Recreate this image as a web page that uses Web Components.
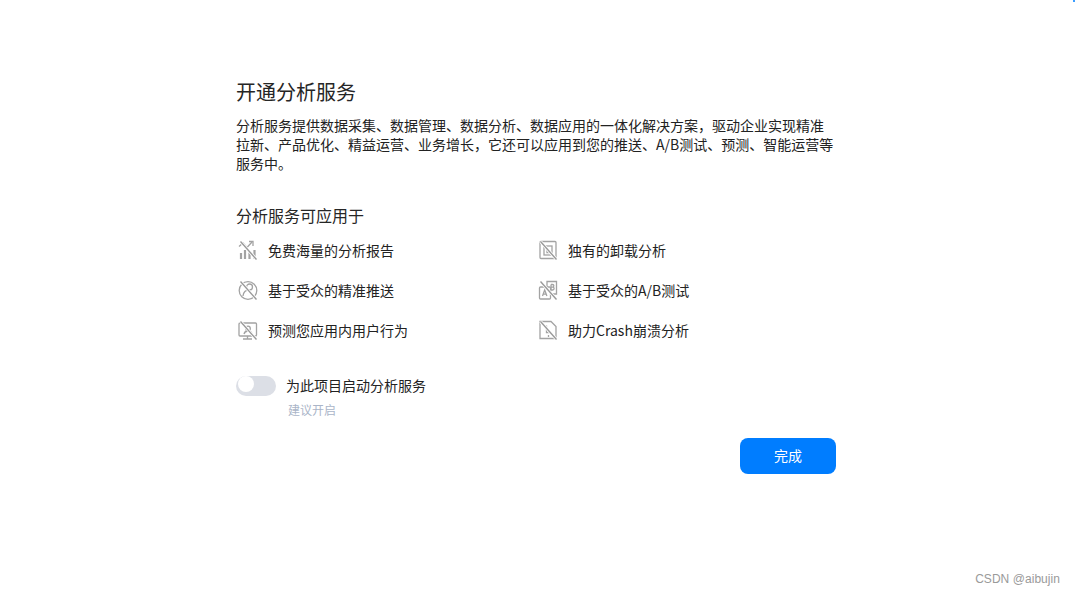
<!DOCTYPE html>
<html lang="zh">
<head>
<meta charset="utf-8">
<style>
html, body { margin: 0; height: 100%; background: #fff; }
body { font-family: "Noto Sans CJK SC", "Liberation Sans", sans-serif; color: #222; text-spacing-trim: space-all; }
</style>
</head>
<body>
<setup-page>
  <span slot="title">开通分析服务</span>
  <span slot="desc">分析服务提供数据采集、数据管理、数据分析、数据应用的一体化解决方案，驱动企业实现精准拉新、产品优化、精益运营、业务增长，它还可以应用到您的推送、A/B测试、预测、智能运营等服务中。</span>
  <span slot="subtitle">分析服务可应用于</span>
  <feature-item icon="chart">免费海量的分析报告</feature-item>
  <feature-item icon="phone">独有的卸载分析</feature-item>
  <feature-item icon="target">基于受众的精准推送</feature-item>
  <feature-item icon="ab">基于受众的A/B测试</feature-item>
  <feature-item icon="screen">预测您应用内用户行为</feature-item>
  <feature-item icon="doc">助力Crash崩溃分析</feature-item>
  <toggle-row hint="建议开启">为此项目启动分析服务</toggle-row>
  <primary-button>完成</primary-button>
</setup-page>

<script>
// every icon gets the same crossed-out line, with a white gap under it
const slash = '<path d="M2.500 1.500l16 18" stroke="#fff" stroke-width="3"/><path d="M2.500 1.500l16 18" stroke="#999" stroke-width="1.400"/>';
const icons = {
  chart: '<path d="M1 6.500l4-3.500 4 4.500 5-5.500"/><path d="M11 1.500h4V6"/><path d="M3 19v-6M7 19v-9M11.500 19v-7M16.500 19v-9" stroke-width="2.200"/>',
  target: '<circle cx="10" cy="10.500" r="8.800"/><circle cx="11.500" cy="7" r="3"/><path d="M5 16c.5-4 3-6 6-6"/>',
  screen: '<rect x="1" y="3" width="17.500" height="13" rx="1"/><path d="M5 19h9M9.500 16v3"/><circle cx="10" cy="8.500" r="2.300"/><path d="M6 14c.5-2 2-3 4-3s3.500 1 4 3"/>',
  phone: '<rect x="2" y="1.500" width="16" height="17" rx="1"/><rect x="6" y="6" width="8" height="9"/><path d="M9 8.500v4h2.500"/>',
  ab: '<path d="M9 7V1.500h9.500V14H13"/><rect x="1.500" y="7" width="11" height="12" rx="1"/><path d="M4.500 16l2.200-6 2.200 6M5.300 14.200h2.800"/><path d="M13 4.500v5.500h1.700a1.400 1.400 0 000-2.800H13M13 4.500h1.500a1.300 1.300 0 010 2.700"/>',
  doc: '<path d="M2 1.500h11l5 5v12H2z"/><path d="M8.500 5.500v7h4M10.500 15v2"/>'
};

const pageTpl = document.createElement('template');
pageTpl.innerHTML = `
<style>
:host { display: block; min-height: 595px; position: relative; padding-left: 236px; }
.main { width: 600px; padding-top: 78px; }
h1 { margin: 0; font-size: 20px; font-weight: 400; line-height: 28px; color: #262626; }
p { margin: 10px 0 0; font-size: 14px; line-height: 19px; color: #222; }
h2 { margin: 31px 0 0; font-size: 16px; font-weight: 400; line-height: 22px; color: #262626; }
.grid { display: grid; grid-template-columns: 300px 300px; grid-auto-rows: 40px; margin-top: 4px; }
.foot { display: flex; justify-content: flex-end; margin-top: 20px; }
.mark { position: absolute; top: 0; right: 0; width: 2px; height: 2px; background: #3b9dff; }
.wm { position: absolute; right: 15px; top: 571px; font: 12px/16px "Liberation Sans", sans-serif; color: #9a9a9a; letter-spacing: .05px; }
</style>
<div class="main">
  <h1><slot name="title"></slot></h1>
  <p><slot name="desc"></slot></p>
  <h2><slot name="subtitle"></slot></h2>
  <div class="grid"><slot></slot></div>
  <slot name="toggle"></slot>
  <div class="foot"><slot name="action"></slot></div>
</div>
<span class="mark"></span>
<span class="wm">CSDN @aibujin</span>`;

class SetupPage extends HTMLElement {
  constructor() {
    super();
    this.attachShadow({mode: 'open'}).appendChild(pageTpl.content.cloneNode(true));
  }
  connectedCallback() {
    this.querySelector('toggle-row')?.setAttribute('slot', 'toggle');
    this.querySelector('primary-button')?.setAttribute('slot', 'action');
  }
}

class FeatureItem extends HTMLElement {
  constructor() {
    super();
    const root = this.attachShadow({mode: 'open'});
    root.innerHTML = `
<style>
:host { display: flex; align-items: center; gap: 10px; height: 40px; font-size: 14px; color: #222; }
svg { width: 20px; height: 20px; margin-left: 2px; flex: none; fill: none; stroke: #a3a3a3; stroke-width: 1.300; }
</style>
<svg viewBox="0 0 20 20">${(icons[this.getAttribute('icon')] || '') + slash}</svg>
<span><slot></slot></span>`;
  }
}

class ToggleRow extends HTMLElement {
  constructor() {
    super();
    const root = this.attachShadow({mode: 'open'});
    root.innerHTML = `
<style>
:host { display: block; margin-top: 26px; }
.row { display: flex; align-items: center; gap: 10px; height: 20px; font-size: 14px; color: #222; }
.row span:last-child { margin-top: -2px; }
.track { width: 40px; height: 20px; border-radius: 10px; background: #dcdfe6; padding: 2px; box-sizing: border-box; }
.knob { display: block; width: 16px; height: 16px; border-radius: 50%; background: #fff; }
.hint { margin: 6px 0 0 52px; font-size: 12px; line-height: 16px; color: #aab5c8; }
</style>
<div class="row"><span class="track"><span class="knob"></span></span><span><slot></slot></span></div>
<div class="hint">${this.getAttribute('hint') || ''}</div>`;
  }
}

class PrimaryButton extends HTMLElement {
  constructor() {
    super();
    const root = this.attachShadow({mode: 'open'});
    root.innerHTML = `
<style>
:host { display: inline-block; }
button { display: block; width: 96px; height: 36px; border: 0; border-radius: 8px; background: #007dff; color: #fff; font: 14px "Noto Sans CJK SC", sans-serif; padding: 0 0 2px; }
</style>
<button><slot></slot></button>`;
  }
}

customElements.define('setup-page', SetupPage);
customElements.define('feature-item', FeatureItem);
customElements.define('toggle-row', ToggleRow);
customElements.define('primary-button', PrimaryButton);
</script>
</body>
</html>
